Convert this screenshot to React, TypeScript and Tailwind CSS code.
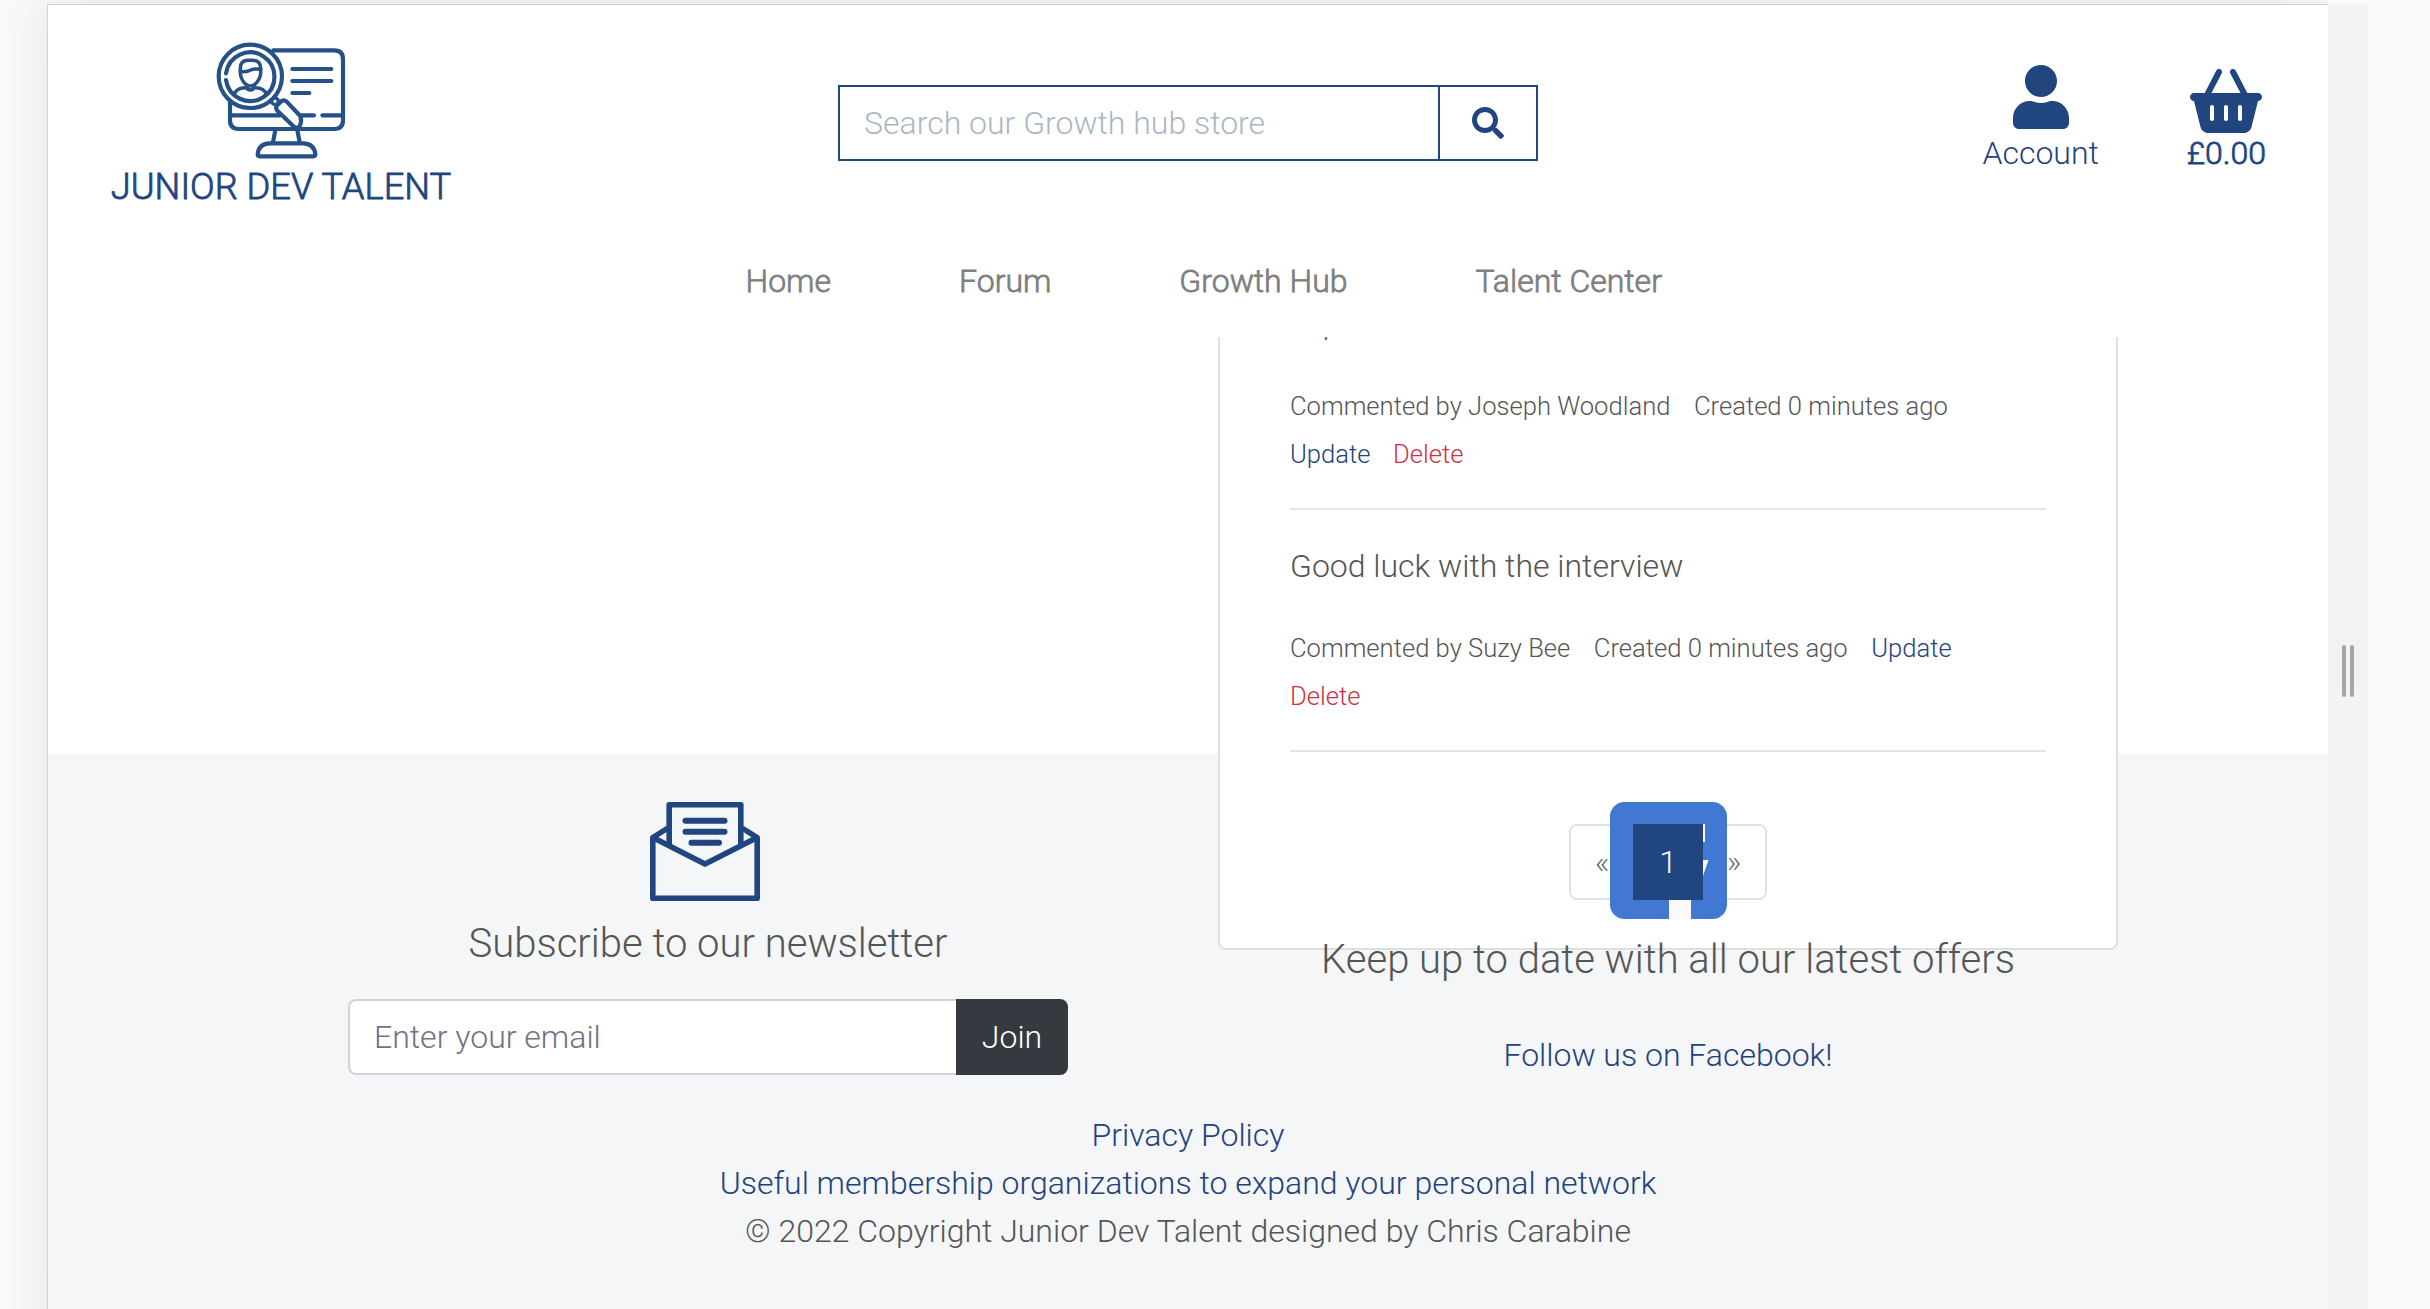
import React from "react";
import { FaUser, FaSearch } from "react-icons/fa";
import { FaBasketShopping } from "react-icons/fa6";

const Logo = () => (
  <svg viewBox="48 34 390 357" className="h-[119px] w-[130px]" fill="none" stroke="#265088" strokeWidth="12.5" strokeLinecap="round" strokeLinejoin="round">
    <path d="M220 62H403Q429 62 429 88V272Q429 298 403 298H116Q90 298 90 272V212" />
    <path d="M92 257H240M304 257H342M367 257H428" />
    <path d="M277 118H394M277 154H394M277 190H328" />
    <path d="M226 301L219 338M292 301L299 338" />
    <path d="M173 374Q176 342 208 341H310Q343 342 346 374Q346 380 340 380H179Q173 380 173 374Z" />
    <circle cx="151" cy="140" r="95" fill="#fff" />
    <path d="M78 131A73 73 0 1 1 78 151" />
    <g strokeWidth="10.5">
      <path d="M121 131V116Q121 92 145 92H158Q182 92 182 116V131Q180 150 165 164Q151 174 137 164Q123 150 121 131Z" />
      <path d="M121 125C137 129 142 125 152 121C162 117 172 117 182 119" />
      <path d="M141 166V172Q142 181 151 181Q160 181 161 172V166" />
      <path d="M103 193Q110 177 128 175L140 174M199 193Q192 177 174 175L162 174" />
    </g>
    <path d="M230 228L245 214Q252 209 260 216L298 256Q305 264 303 276L300 288Q293 299 282 291L232 243Q226 236 230 228Z" fill="#fff" />
    <circle cx="225" cy="215" r="10" fill="#fff" strokeWidth="10" />
  </svg>
);

const Envelope = () => (
  <svg viewBox="0 0 110 99" className="h-[99px] w-[110px]" fill="none" stroke="#20457f" strokeWidth="5.6" strokeLinejoin="round">
    <path d="M19.2 44V2.8H90.8V44" />
    <path d="M18 26L2.8 35.5V96.2H107.2V35.5L92 26" />
    <path d="M2.8 35.5L55 62L107.2 35.5" />
    <path d="M35.5 18.8H74.5M35.5 29.8H74.5M41.5 40.7H69" strokeWidth="6" strokeLinecap="round" />
  </svg>
);

const Facebook = () => (
  <svg viewBox="0 0 117 117" className="h-[117px] w-[117px]">
    <rect width="117" height="117" rx="14.5" fill="#4277d2" />
    <path d="M59 117V77H45V58H59V47Q59 22 83 22H95V40H86Q81 40 81 47V58H98.5L92 77H81V117Z" fill="#fafafa" />
  </svg>
);

const Meta = ({ children }: { children: React.ReactNode }) => (
  <div className="flex h-12 gap-[23.5px] pt-[2px] text-[25.6px] leading-[48px]">{children}</div>
);

export default function App() {
  return (
    <div className="flex h-[1309px] w-[2430px] overflow-hidden bg-[#f8faf9] font-[Roboto,sans-serif] text-[32px] font-light leading-[48px] text-[#555]">
      <div className="h-[1309px] w-[2328px] shrink-0 overflow-hidden pl-[47px] pt-1">
        <div className="flex h-[1330px] flex-col border-l border-t border-[#cfd2d1] bg-white shadow-[0_0_50px_rgba(0,0,0,0.09)]">
          <header className="relative z-30 flex h-[332px] shrink-0 flex-col bg-white text-[#20457f]">
            <div className="flex h-[252px]">
              <div className="ml-[60px] flex w-[346px] flex-col items-center pt-[36px]">
                <Logo />
                <span className="whitespace-nowrap text-[36.3px] leading-[54px] [-webkit-text-stroke:0.8px_#20457f]">JUNIOR DEV TALENT</span>
              </div>
              <div className="ml-[384px] mt-20 flex h-[76px] w-[700px] border-2 border-[#20457f]">
                <div className="flex flex-1 items-center pl-6 text-[#aab7c4]">Search our Growth hub store</div>
                <div className="flex w-[98px] items-center justify-center border-l-2 border-[#20457f]">
                  <FaSearch size={32} />
                </div>
              </div>
              <div className="ml-auto mr-[62px] flex gap-[88px] pt-[60px]">
                <div className="flex flex-col items-center">
                  <FaUser className="h-16 w-14" />
                  <span className="text-[#23427d]">Account</span>
                </div>
                <div className="flex flex-col items-center pt-1">
                  <FaBasketShopping className="h-16 w-[72px]" />
                  <span className="-mt-1 [-webkit-text-stroke:0.8px_#20457f]">£0.00</span>
                </div>
              </div>
            </div>
            <nav className="flex gap-32 pl-[697.5px] text-[#7f7f7f] [-webkit-text-stroke:0.8px_#7f7f7f]">
              <span>Home</span>
              <span>Forum</span>
              <span>Growth Hub</span>
              <span>Talent Center</span>
            </nav>
          </header>

          <main className="h-[417px] shrink-0 pl-[1170px]">
            <section className="relative flow-root h-[613px] w-[900px] rounded-b-lg border-2 border-t-0 border-[#dfdfdf] bg-white px-[70px]">
              <p className="-ml-[4px] -mt-[38px] mb-[33px]">Super</p>
              <Meta>
                <span>Commented by Joseph Woodland</span>
                <span>Created 0 minutes ago</span>
              </Meta>
              <Meta>
                <span className="text-[#23427d]">Update</span>
                <span className="-ml-px text-[#cb303f]">Delete</span>
              </Meta>
              <hr className="my-8 border-t-2 border-[#e5e5e5]" />
              <p className="mb-8">Good luck with the interview</p>
              <Meta>
                <span>Commented by Suzy Bee</span>
                <span>Created 0 minutes ago</span>
                <span className="text-[#23427d]">Update</span>
              </Meta>
              <Meta>
                <span className="text-[#cb303f]">Delete</span>
              </Meta>
              <hr className="mt-8 border-t-2 border-[#e5e5e5]" />
              <div className="mt-[72px] flex justify-center leading-10 text-[#6c757d]">
                <span className="h-[76px] w-[66px] rounded-l-lg border-2 border-[#dee2e6] py-4 text-center">«</span>
                <span className="relative z-10 -ml-0.5 h-[76px] w-[70px] bg-[#20457f] py-[18px] text-center text-white">1</span>
                <span className="-ml-0.5 h-[76px] w-[66px] rounded-r-lg border-2 border-[#dee2e6] py-4 text-center">»</span>
              </div>
            </section>
          </main>

          <footer className="flex-1 bg-[#f4f6f8]">
            <div className="relative pt-12">
              <div className="flex h-[309px] px-[180px]">
                <div className="flex w-[960px] flex-col items-center">
                  <div className="mr-[6px]">
                    <Envelope />
                  </div>
                  <h4 className="mb-[31px] mt-[19px] text-[40px]">Subscribe to our newsletter</h4>
                  <div className="flex h-[76px] w-[720px]">
                    <div className="flex flex-1 items-center rounded-l-lg border-2 border-r-0 border-[#ced4da] bg-white pl-6 text-[#6c757d]">Enter your email</div>
                    <div className="flex w-[112px] items-center justify-center rounded-r-lg bg-[#343a40] text-white">Join</div>
                  </div>
                </div>
                <div className="flex w-[960px] flex-col items-center">
                  <Facebook />
                  <h4 className="mt-[17px] text-[40px]">Keep up to date with all our latest offers</h4>
                  <a className="mt-[47px] text-[#23427d]">Follow us on Facebook!</a>
                </div>
              </div>
              <div className="flex flex-col items-center text-[#23427d]">
                <a>Privacy Policy</a>
                <a>Useful membership organizations to expand your personal network</a>
                <p className="text-[#555]">© 2022 Copyright Junior Dev Talent designed by Chris Carabine</p>
              </div>
            </div>
          </footer>
        </div>
      </div>

      <div className="mt-1 flex w-10 shrink-0 gap-1 bg-[#f1f3f5] pl-[14px] pt-[641px]">
        <span className="h-[52px] w-1 rounded-sm bg-[#a6a6a6]" />
        <span className="h-[52px] w-1 rounded-sm bg-[#a6a6a6]" />
      </div>
    </div>
  );
}
